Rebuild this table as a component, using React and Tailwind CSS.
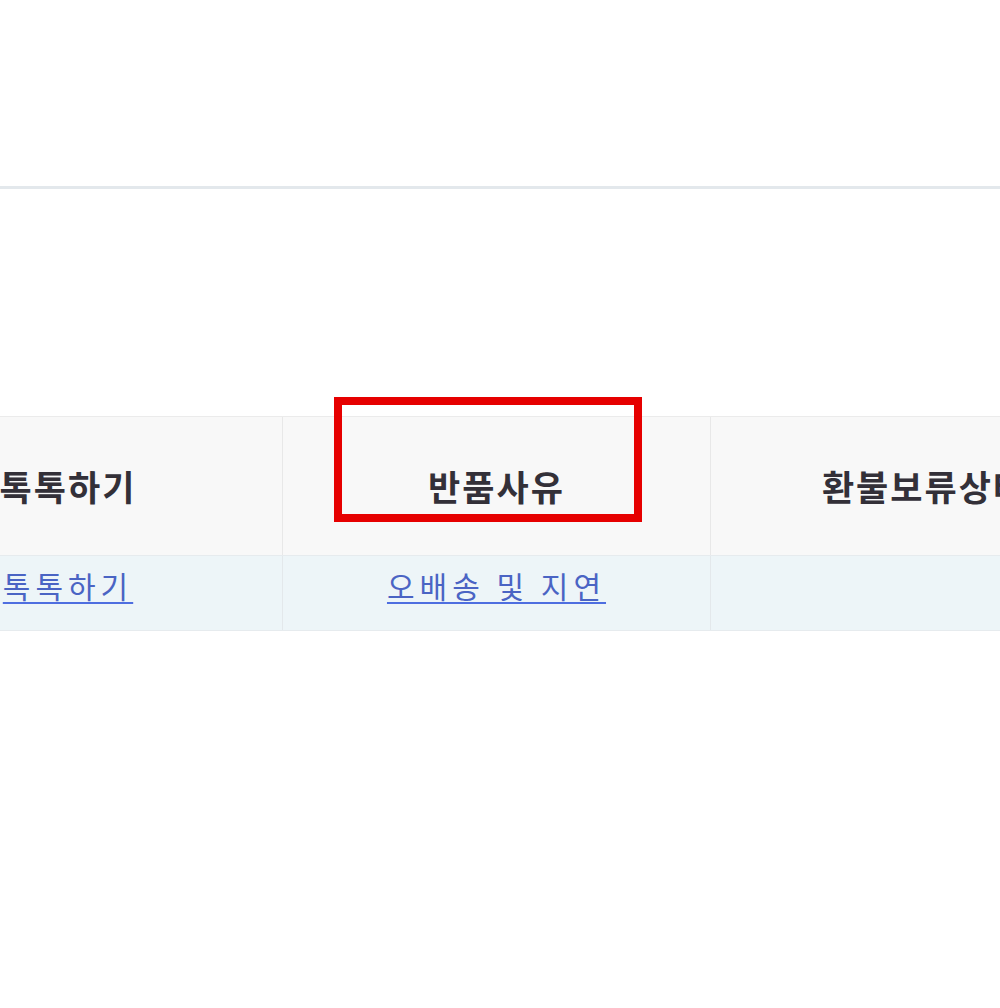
import React from 'react';

const FONT = { fontFamily: '"Noto Sans CJK KR", "Noto Sans", sans-serif' };

const columns = [
  { head: '톡톡하기', value: '톡톡하기' },
  { head: '반품사유', value: '오배송 및 지연' },
  { head: '환불보류상태', value: '' },
];

export default function App() {
  return (
    <div className="relative w-[1000px] h-[1008px] overflow-hidden bg-white" style={FONT}>
      {/* top divider */}
      <div className="h-[186px]" />
      <div className="h-[3px] bg-[#e3e8ec]" />
      <div className="h-[227px]" />

      {/* order table, first column scrolled off to the left */}
      <div className="relative ml-[-146px] w-[1284px]">
        <div className="grid grid-cols-3 border-t border-[#ebebeb] bg-[#f8f8f8]">
          {columns.map((col, i) => (
            <div
              key={col.head}
              className={`flex h-[138px] items-center justify-center whitespace-nowrap text-[35px] font-bold tracking-[2px] text-[#333038] ${i > 0 ? 'border-l border-[#e8e8e8]' : ''}`}
            >
              {col.head}
            </div>
          ))}
        </div>
        <div className="grid grid-cols-3 border-t border-b border-[#e6ebee] bg-[#edf5f8]">
          {columns.map((col, i) => (
            <div
              key={col.head}
              className={`flex h-[74px] items-center justify-center pb-[16px] ${i > 0 ? 'border-l border-[#e3e8eb]' : ''}`}
            >
              {col.value && (
                <a
                  href="#"
                  className="whitespace-nowrap text-[30px] leading-[36px] tracking-[5px] text-[#4a64c4] underline decoration-[#4e6ee0] decoration-2 underline-offset-[4px]"
                >
                  {col.value}
                </a>
              )}
            </div>
          ))}
        </div>

        {/* highlight box */}
        <div className="absolute left-[480px] top-[-19px] h-[125px] w-[308px] border-[8px] border-[#e60000]" />
      </div>
    </div>
  );
}
